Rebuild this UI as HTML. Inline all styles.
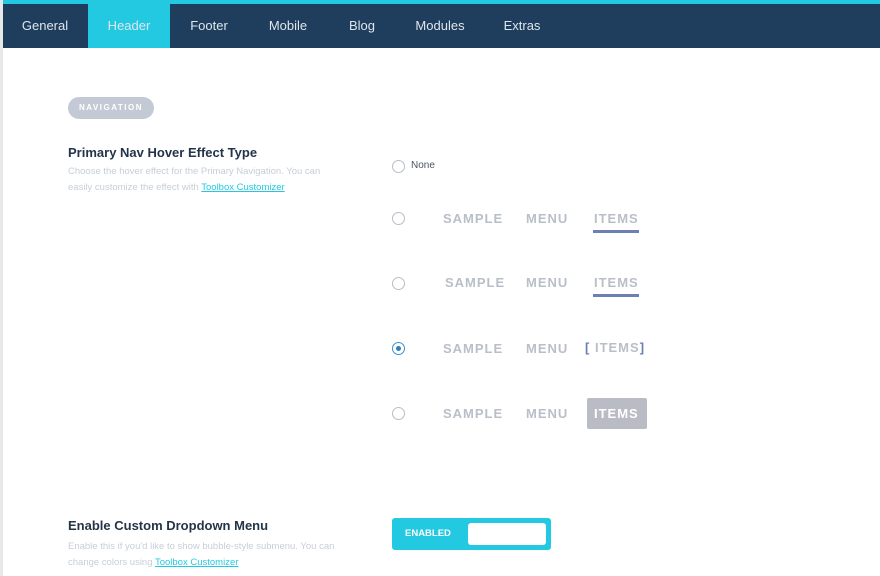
<!DOCTYPE html>
<html><head><style>
*{margin:0;padding:0;box-sizing:border-box}
body{width:880px;height:576px;background:#fff;font-family:"Liberation Sans",sans-serif;position:relative;overflow:hidden}
.lb{position:absolute;left:0;top:0;width:3px;height:576px;background:#e8e8e8}
.top{position:absolute;left:3px;top:0;right:0;height:4px;background:#23c9e1}
.nav{position:absolute;left:3px;top:4px;right:0;height:44px;background:#1f3d5c}
.t{position:absolute;top:4px;height:44px;line-height:44px;color:#dfe6ee;font-size:13px;transform:translateX(-50%)}
.act{position:absolute;left:88px;top:4px;width:82px;height:44px;background:#23c9e1}
.pill{position:absolute;left:68px;top:97px;width:86px;height:22px;border-radius:11px;background:#c3cad6;color:#fff;font-size:8px;letter-spacing:1.5px;text-align:center;line-height:22px;font-weight:bold}
h3{position:absolute;left:68px;font-size:13px;color:#24344a;font-weight:bold}
.d{position:absolute;left:68px;font-size:9.5px;color:#c7ced8;line-height:15.5px;width:320px;white-space:nowrap}
.d a{color:#23c9e1;text-decoration:underline}
.r{position:absolute;left:392px;width:13px;height:13px;border:1px solid #b8bec6;border-radius:50%}
.r.on{border-color:#3a8fd0}
.r.on::after{content:"";position:absolute;left:3px;top:3px;width:5px;height:5px;border-radius:50%;background:#2f7fbf}
.s{position:absolute;font-size:13px;font-weight:bold;color:#b9bfc9;letter-spacing:1px}
.ul{position:absolute;height:3px;background:#6b7fb0;width:46px;left:593px}
.tog{position:absolute;left:392px;top:518px;width:159px;height:32px;background:#23c9e1;border-radius:3px}
.tog span{position:absolute;left:13px;top:0;line-height:32px;color:#fff;font-size:9.5px;font-weight:bold}
.tog i{position:absolute;left:76px;top:5px;width:78px;height:22px;background:#fff;border-radius:3px}
</style></head><body>
<div class="lb"></div><div class="top"></div><div class="nav"></div><div class="act"></div>
<div class="t" style="left:45px">General</div>
<div class="t" style="left:129px">Header</div>
<div class="t" style="left:209px">Footer</div>
<div class="t" style="left:288px">Mobile</div>
<div class="t" style="left:362px">Blog</div>
<div class="t" style="left:440px">Modules</div>
<div class="t" style="left:522px">Extras</div>
<div class="pill">NAVIGATION</div>
<h3 style="top:145px">Primary Nav Hover Effect Type</h3>
<div class="d" style="top:164px">Choose the hover effect for the Primary Navigation. You can<br>easily customize the effect with <a>Toolbox Customizer</a></div>
<div class="r" style="top:160px"></div><div style="position:absolute;left:411px;top:160px;font-size:10px;color:#4a5566">None</div>
<div class="r" style="top:212px"></div>
<div class="s" style="left:443px;top:211px">SAMPLE</div><div class="s" style="left:526px;top:211px">MENU</div><div class="s" style="left:594px;top:211px">ITEMS</div><div class="ul" style="top:230px"></div>
<div class="r" style="top:277px"></div>
<div class="s" style="left:445px;top:275px">SAMPLE</div><div class="s" style="left:526px;top:275px">MENU</div><div class="s" style="left:594px;top:275px">ITEMS</div><div class="ul" style="top:294px"></div>
<div class="r on" style="top:342px"></div>
<div class="s" style="left:443px;top:341px">SAMPLE</div><div class="s" style="left:526px;top:341px">MENU</div><div class="s" style="left:585px;top:340px"><span style="color:#6b7fb0">[</span> ITEMS<span style="color:#6b7fb0">]</span></div>
<div class="r" style="top:407px"></div>
<div class="s" style="left:443px;top:406px">SAMPLE</div><div class="s" style="left:526px;top:406px">MENU</div>
<div style="position:absolute;left:587px;top:398px;width:60px;height:31px;background:#b9bcc4;border-radius:2px"></div><div class="s" style="left:594px;top:406px;color:#fff">ITEMS</div>
<h3 style="top:518px">Enable Custom Dropdown Menu</h3>
<div class="d" style="top:539px">Enable this if you'd like to show bubble-style submenu. You can<br>change colors using <a>Toolbox Customizer</a></div>
<div class="tog"><span>ENABLED</span><i></i></div>
</body></html>
